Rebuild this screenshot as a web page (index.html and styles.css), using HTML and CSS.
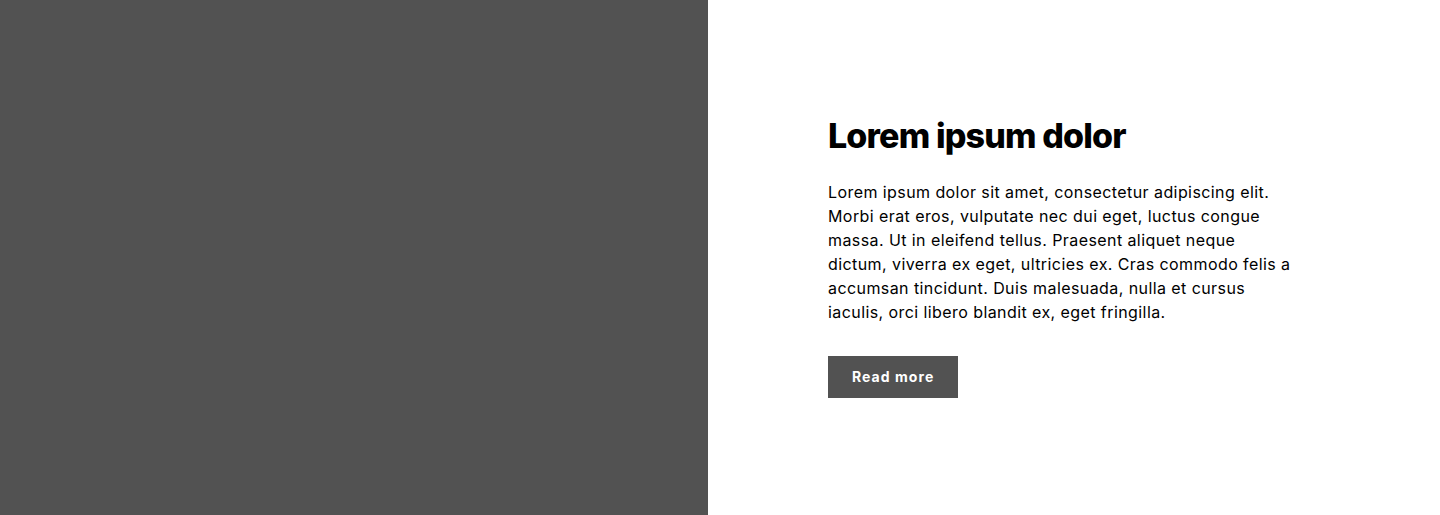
FILE: index.html
```html
<!DOCTYPE html>
<html lang="en">
<head>
<meta charset="utf-8">
<title>Lorem ipsum dolor</title>
<link rel="stylesheet" href="styles.css">
</head>
<body>
<section class="split">
  <div class="media"></div>
  <div class="content">
    <div class="content-inner">
      <h1 class="title">Lorem ipsum dolor</h1>
      <p class="text">Lorem ipsum dolor sit amet, consectetur adipiscing elit. Morbi erat eros, vulputate nec dui eget, luctus congue massa. Ut in eleifend tellus. Praesent aliquet neque dictum, viverra ex eget, ultricies ex. Cras commodo felis a accumsan tincidunt. Duis malesuada, nulla et cursus iaculis, orci libero blandit ex, eget fringilla.</p>
      <a class="btn" href="#">Read more</a>
    </div>
  </div>
</section>
</body>
</html>
```
FILE: styles.css
```css
html, body {
  margin: 0;
  padding: 0;
  background: #ffffff;
}
body {
  font-family: Inter, "Noto Sans", sans-serif;
  color: #000;
}
.split {
  display: grid;
  grid-template-columns: 708px 1fr;
  height: 515px;
}
.media {
  background: #525252;
}
.content {
  display: flex;
  align-items: center;
  padding-left: 120px;
  padding-bottom: 2px;
}
.content-inner {
  width: 466px;
}
.title {
  margin: 0 0 24px;
  font-size: 34px;
  line-height: 40px;
  font-weight: 800;
  letter-spacing: -0.85px;
}
.text {
  margin: 0 0 32px;
  font-size: 16px;
  line-height: 24px;
  font-weight: 400;
  letter-spacing: 0.42px;
}
.btn {
  display: inline-block;
  background: #525252;
  color: #fff;
  text-decoration: none;
  font-size: 14px;
  font-weight: 700;
  line-height: 42px;
  padding: 0 24px;
  letter-spacing: 1.05px;
}
```
